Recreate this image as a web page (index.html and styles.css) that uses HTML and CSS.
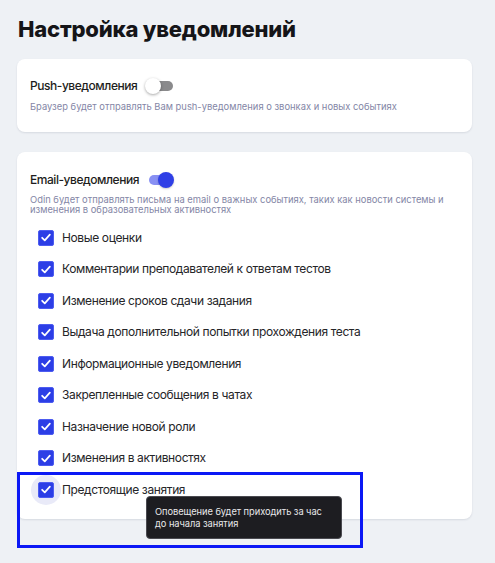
FILE: index.html
```html
<!DOCTYPE html>
<html lang="ru">
<head>
<meta charset="utf-8">
<title>Настройка уведомлений</title>
<link rel="stylesheet" href="styles.css">
</head>
<body>
<div class="page">
  <h1 class="title">Настройка уведомлений</h1>

  <section class="card card-push">
    <div class="head">
      <span class="head-label">Push-уведомления</span>
      <span class="switch switch-off"><span class="track"></span><span class="thumb"></span></span>
    </div>
    <p class="desc">Браузер будет отправлять Вам push-уведомления о звонках и новых событиях</p>
  </section>

  <section class="card card-email">
    <div class="head">
      <span class="head-label">Email-уведомления</span>
      <span class="switch switch-on"><span class="track"></span><span class="thumb"></span></span>
    </div>
    <p class="desc">Odin будет отправлять письма на email о важных событиях, таких как новости системы и изменения в образовательных активностях</p>
    <ul class="list">
      <li class="row"><span class="box"><svg viewBox="0 0 16 16"><path d="M3.6 8.3 L6.6 11.2 L12.4 4.8"/></svg></span><span class="label">Новые оценки</span></li>
      <li class="row"><span class="box"><svg viewBox="0 0 16 16"><path d="M3.6 8.3 L6.6 11.2 L12.4 4.8"/></svg></span><span class="label">Комментарии преподавателей к ответам тестов</span></li>
      <li class="row"><span class="box"><svg viewBox="0 0 16 16"><path d="M3.6 8.3 L6.6 11.2 L12.4 4.8"/></svg></span><span class="label">Изменение сроков сдачи задания</span></li>
      <li class="row"><span class="box"><svg viewBox="0 0 16 16"><path d="M3.6 8.3 L6.6 11.2 L12.4 4.8"/></svg></span><span class="label">Выдача дополнительной попытки прохождения теста</span></li>
      <li class="row"><span class="box"><svg viewBox="0 0 16 16"><path d="M3.6 8.3 L6.6 11.2 L12.4 4.8"/></svg></span><span class="label">Информационные уведомления</span></li>
      <li class="row"><span class="box"><svg viewBox="0 0 16 16"><path d="M3.6 8.3 L6.6 11.2 L12.4 4.8"/></svg></span><span class="label">Закрепленные сообщения в чатах</span></li>
      <li class="row"><span class="box"><svg viewBox="0 0 16 16"><path d="M3.6 8.3 L6.6 11.2 L12.4 4.8"/></svg></span><span class="label">Назначение новой роли</span></li>
      <li class="row"><span class="box"><svg viewBox="0 0 16 16"><path d="M3.6 8.3 L6.6 11.2 L12.4 4.8"/></svg></span><span class="label">Изменения в активностях</span></li>
      <li class="row row-hover"><span class="box box-hover"><svg viewBox="0 0 16 16"><path d="M3.6 8.3 L6.6 11.2 L12.4 4.8"/></svg></span><span class="label">Предстоящие занятия</span>
        <div class="tooltip">Оповещение будет приходить за час до начала занятия</div>
      </li>
    </ul>
  </section>

  <div class="highlight"></div>
</div>
</body>
</html>
```

FILE: styles.css
```css
html, body {
  margin: 0;
  padding: 0;
  background: #eef1f5;
}

body {
  font-family: Inter, "Noto Sans", sans-serif;
  color: #1f1f22;
  height: 563px;
  overflow: hidden;
}

.page {
  position: relative;
  width: 455px;
  margin-left: 17px;
  padding-top: 15px;
}

.title {
  margin: 0 0 15px 1px;
  font-size: 22px;
  line-height: 29px;
  font-weight: 800;
  color: #151518;
  letter-spacing: -0.2px;
}

.card {
  background: #ffffff;
  border-radius: 8px;
  box-shadow: 0 1px 2px rgba(40, 50, 80, 0.12);
  padding: 19px 13px 19px 13px;
}

.card-email {
  margin-top: 20px;
  padding-top: 20px;
  padding-bottom: 13px;
}

.head {
  display: flex;
  align-items: center;
  height: 16px;
}

.head-label {
  font-size: 12px;
  font-weight: 500;
  color: #1d1d20;
  line-height: 16px;
  letter-spacing: -0.45px;
}

.switch {
  position: relative;
  width: 30px;
  height: 16px;
  margin-left: 8px;
}

.switch .track {
  position: absolute;
  top: 3px;
  height: 10px;
  border-radius: 5px;
}

.switch .thumb {
  position: absolute;
  top: 0;
  width: 16px;
  height: 16px;
  border-radius: 50%;
}

.switch-off .track {
  left: 4px;
  width: 24px;
  background: #8a8a8c;
}

.switch-off .thumb {
  left: 0;
  background: #ffffff;
  box-shadow: 0 1px 3px rgba(0, 0, 0, 0.35);
}

.switch-on {
  margin-left: 10px;
}

.switch-on .track {
  left: 0;
  width: 24px;
  background: #8890f3;
}

.switch-on .thumb {
  left: 9px;
  background: #2f3fe6;
  box-shadow: 0 1px 2px rgba(0, 0, 0, 0.2);
}

.desc {
  margin: 7px 0 0 0;
  font-size: 9.4px;
  line-height: 10px;
  color: #8486a6;
}

.card-push .desc {
  line-height: 12px;
}

.list {
  list-style: none;
  margin: 7px 0 0 0;
  padding: 0 0 0 8px;
}

.row {
  position: relative;
  display: flex;
  align-items: center;
  height: 31.5px;
}

.box {
  position: relative;
  width: 16px;
  height: 16px;
  flex: none;
  background: #2c3ee6;
  border: 1px solid #4d5cf0;
  box-sizing: border-box;
  border-radius: 2px;
  display: flex;
  align-items: center;
  justify-content: center;
}

.box svg {
  position: relative;
  width: 15px;
  height: 15px;
  fill: none;
  stroke: #ffffff;
  stroke-width: 2;
  stroke-linecap: round;
  stroke-linejoin: round;
}

.row-hover {
  z-index: 0;
}

.box-hover::before {
  content: "";
  position: absolute;
  left: -8px;
  top: -8px;
  width: 30px;
  height: 30px;
  border-radius: 50%;
  background: #e9eaf8;
  z-index: -1;
}

.label {
  margin-left: 8px;
  font-size: 12px;
  color: #252528;
  line-height: 16px;
  letter-spacing: -0.38px;
}

.tooltip {
  position: absolute;
  left: 108px;
  top: 22px;
  width: 196px;
  box-sizing: border-box;
  padding: 9px 8px 8px 8px;
  background: #1d1d21;
  border: 1px solid #4a4a50;
  border-radius: 4px;
  color: #e8e8ea;
  font-size: 9.3px;
  line-height: 12px;
  letter-spacing: -0.05px;
  z-index: 5;
}

.highlight {
  position: absolute;
  left: 0;
  top: 472px;
  width: 346px;
  height: 76px;
  box-sizing: border-box;
  border: 3px solid #0b18f5;
  pointer-events: none;
  z-index: 10;
}
```
